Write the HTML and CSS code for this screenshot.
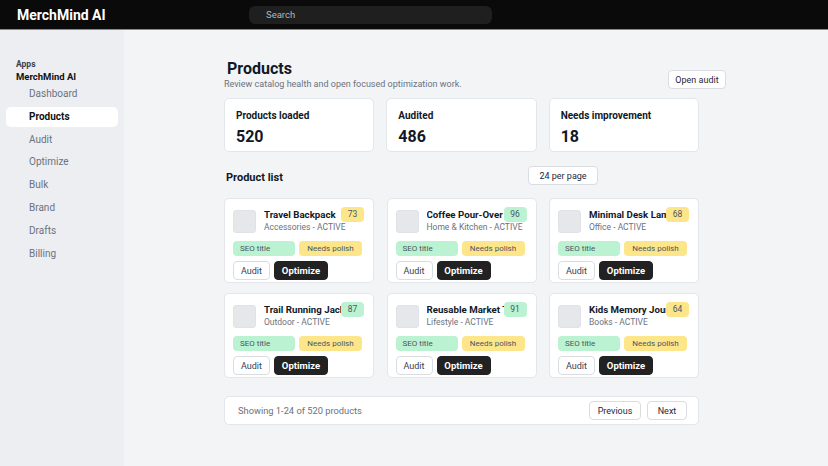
FILE: index.html
```html
<!DOCTYPE html>
<html>

<head>
  <meta charset="utf-8">
  <title>MerchMind AI - Products</title>
  <link rel="stylesheet" href="styles.css">
</head>

<body>
  <header class="topbar">
    <div class="brand">MerchMind AI</div>
    <div class="search">Search</div>
  </header>

  <div class="layout">
    <nav class="sidebar">
      <div class="side_label">Apps</div>
      <div class="side_app">MerchMind AI</div>
      <a class="nav_item">Dashboard</a>
      <a class="nav_item active">Products</a>
      <a class="nav_item">Audit</a>
      <a class="nav_item">Optimize</a>
      <a class="nav_item">Bulk</a>
      <a class="nav_item">Brand</a>
      <a class="nav_item">Drafts</a>
      <a class="nav_item">Billing</a>
    </nav>

    <main class="main">
      <div class="page_head">
        <div>
          <h1>Products</h1>
          <p class="subtitle">Review catalog health and open focused optimization work.</p>
        </div>
        <button class="btn btn_open">Open audit</button>
      </div>

      <div class="stats">
        <div class="stat">
          <div class="stat_label">Products loaded</div>
          <div class="stat_value">520</div>
        </div>
        <div class="stat">
          <div class="stat_label">Audited</div>
          <div class="stat_value">486</div>
        </div>
        <div class="stat">
          <div class="stat_label">Needs improvement</div>
          <div class="stat_value">18</div>
        </div>
      </div>

      <div class="list_head">
        <h2>Product list</h2>
        <button class="btn btn_perpage">24 per page</button>
      </div>

      <div class="grid">
        <div class="card">
          <span class="score yellow">73</span>
          <div class="card_top">
            <div class="thumb"></div>
            <div class="card_info">
              <div class="card_title">Travel Backpack</div>
              <div class="card_sub">Accessories - ACTIVE</div>
            </div>
          </div>
          <div class="tags"><span class="tag green">SEO title</span><span class="tag yellow">Needs polish</span></div>
          <div class="actions"><button class="btn btn_audit">Audit</button><button class="btn btn_dark">Optimize</button></div>
        </div>

        <div class="card">
          <span class="score green">96</span>
          <div class="card_top">
            <div class="thumb"></div>
            <div class="card_info">
              <div class="card_title">Coffee Pour-Over</div>
              <div class="card_sub">Home &amp; Kitchen - ACTIVE</div>
            </div>
          </div>
          <div class="tags"><span class="tag green">SEO title</span><span class="tag yellow">Needs polish</span></div>
          <div class="actions"><button class="btn btn_audit">Audit</button><button class="btn btn_dark">Optimize</button></div>
        </div>

        <div class="card">
          <span class="score yellow">68</span>
          <div class="card_top">
            <div class="thumb"></div>
            <div class="card_info">
              <div class="card_title">Minimal Desk Lamp</div>
              <div class="card_sub">Office - ACTIVE</div>
            </div>
          </div>
          <div class="tags"><span class="tag green">SEO title</span><span class="tag yellow">Needs polish</span></div>
          <div class="actions"><button class="btn btn_audit">Audit</button><button class="btn btn_dark">Optimize</button></div>
        </div>

        <div class="card">
          <span class="score green">87</span>
          <div class="card_top">
            <div class="thumb"></div>
            <div class="card_info">
              <div class="card_title">Trail Running Jacket</div>
              <div class="card_sub">Outdoor - ACTIVE</div>
            </div>
          </div>
          <div class="tags"><span class="tag green">SEO title</span><span class="tag yellow">Needs polish</span></div>
          <div class="actions"><button class="btn btn_audit">Audit</button><button class="btn btn_dark">Optimize</button></div>
        </div>

        <div class="card">
          <span class="score green">91</span>
          <div class="card_top">
            <div class="thumb"></div>
            <div class="card_info">
              <div class="card_title">Reusable Market Tote</div>
              <div class="card_sub">Lifestyle - ACTIVE</div>
            </div>
          </div>
          <div class="tags"><span class="tag green">SEO title</span><span class="tag yellow">Needs polish</span></div>
          <div class="actions"><button class="btn btn_audit">Audit</button><button class="btn btn_dark">Optimize</button></div>
        </div>

        <div class="card">
          <span class="score yellow">64</span>
          <div class="card_top">
            <div class="thumb"></div>
            <div class="card_info">
              <div class="card_title">Kids Memory Journal</div>
              <div class="card_sub">Books - ACTIVE</div>
            </div>
          </div>
          <div class="tags"><span class="tag green">SEO title</span><span class="tag yellow">Needs polish</span></div>
          <div class="actions"><button class="btn btn_audit">Audit</button><button class="btn btn_dark">Optimize</button></div>
        </div>
      </div>

      <div class="pager">
        <span class="pager_text">Showing 1-24 of 520 products</span>
        <div class="pager_btns">
          <button class="btn btn_prev">Previous</button>
          <button class="btn btn_next">Next</button>
        </div>
      </div>
    </main>
  </div>
</body>

</html>
```

FILE: styles.css
```css
* {
  box-sizing: border-box;
}

body {
  margin: 0;
  font-family: Roboto, "Noto Sans", sans-serif;
  color: #111827;
  background-color: #f3f4f6;
}

button {
  font-family: inherit;
}

/* top bar */
.topbar {
  height: 30px;
  background-color: #0a0a0a;
  border-bottom: 1px solid #8a8a8a;
  display: flex;
  align-items: center;
}

.brand {
  width: 249px;
  padding-left: 17px;
  color: #fff;
  font-size: 14px;
  font-weight: 700;
}

.search {
  width: 243px;
  height: 18px;
  margin-top: 1px;
  padding-left: 17px;
  border-radius: 6px;
  background-color: #1f1f1f;
  color: #b5b5b5;
  font-size: 9.5px;
  line-height: 18px;
}

/* layout */
.layout {
  display: flex;
  height: 436px;
}

.sidebar {
  width: 124px;
  flex-shrink: 0;
  background-color: #eceef1;
  padding: 28px 6px 0 6px;
}

.side_label {
  padding-left: 10px;
  font-size: 8.5px;
  font-weight: 700;
  color: #374151;
  line-height: 12px;
}

.side_app {
  padding-left: 10px;
  margin-bottom: 1px;
  font-size: 9.5px;
  font-weight: 700;
  color: #111;
  line-height: 13px;
}

.nav_item {
  display: block;
  height: 20px;
  line-height: 20px;
  margin-bottom: 2.8px;
  padding-left: 23px;
  border-radius: 5px;
  font-size: 10px;
  color: #6b7280;
}

.nav_item.active {
  background-color: #fff;
  color: #111;
  font-weight: 700;
}

/* main */
.main {
  flex: 1;
  padding: 30px 0 0 100px;
}

.page_head {
  width: 502px;
  display: flex;
  justify-content: space-between;
  align-items: flex-end;
}

h1 {
  margin: 0 0 0 3px;
  font-size: 16px;
  font-weight: 700;
  line-height: 18px;
}

.subtitle {
  margin: 0;
  font-size: 9px;
  line-height: 12px;
  color: #6b7280;
}

.btn {
  height: 19px;
  padding: 0;
  border: 1px solid #d9dce1;
  border-radius: 4px;
  background-color: #fff;
  color: #1f2937;
  font-size: 9px;
  cursor: pointer;
}

.btn_open {
  width: 58px;
  margin-bottom: 1px;
}

.stats {
  width: 475px;
  margin-top: 8px;
  display: grid;
  grid-template-columns: 1fr 1fr 1fr;
  column-gap: 12px;
}

.stat {
  height: 54px;
  padding: 10px 11px 0 11px;
  background-color: #fff;
  border: 1px solid #e3e6ea;
  border-radius: 5px;
}

.stat_label {
  font-size: 10px;
  font-weight: 700;
  line-height: 14px;
}

.stat_value {
  margin-top: 5px;
  font-size: 16px;
  font-weight: 700;
  line-height: 18px;
}

.list_head {
  width: 374px;
  margin-top: 14px;
  display: flex;
  justify-content: space-between;
  align-items: center;
}

h2 {
  margin: 3px 0 0 2px;
  font-size: 11px;
  font-weight: 700;
}

.btn_perpage {
  width: 70px;
}

/* product grid */
.grid {
  width: 475px;
  margin-top: 13px;
  display: grid;
  grid-template-columns: 1fr 1fr 1fr;
  gap: 10px 12.5px;
}

.card {
  position: relative;
  height: 85px;
  padding: 9px 8px 0 8px;
  background-color: #fff;
  border: 1px solid #e3e6ea;
  border-radius: 5px;
  overflow: hidden;
}

.card_top {
  display: flex;
  align-items: center;
  gap: 8px;
}

.thumb {
  width: 23px;
  height: 23px;
  flex-shrink: 0;
  border-radius: 3px;
  background-color: #e5e7eb;
  border: 1px solid #dfe2e6;
}

.card_info {
  min-width: 0;
  flex: 1;
}

.card_title {
  margin-right: 23px;
  font-size: 9.7px;
  font-weight: 700;
  line-height: 13px;
  white-space: nowrap;
  overflow: hidden;
}

.card_sub {
  font-size: 8.5px;
  color: #6b7280;
  line-height: 13px;
}

.score {
  position: absolute;
  top: 8px;
  right: 9px;
  width: 23px;
  height: 15px;
  border-radius: 4px;
  font-size: 8.5px;
  line-height: 15px;
  text-align: center;
  color: #4b5563;
}

.yellow {
  background-color: #fde68a;
}

.green {
  background-color: #bbf2d2;
}

.tags {
  margin-top: 7px;
  display: grid;
  grid-template-columns: 62px 63px;
  gap: 4px;
}

.tag {
  height: 15px;
  border-radius: 4px;
  font-size: 8px;
  line-height: 15px;
  text-align: center;
  color: #4b5563;
}

.tag.green {
  text-align: left;
  padding-left: 7px;
}

.actions {
  margin-top: 5px;
  display: flex;
  gap: 4px;
}

.btn_audit {
  width: 37px;
  font-size: 9px;
  color: #374151;
}

.btn_dark {
  width: 54px;
  background-color: #222;
  border-color: #222;
  color: #fff;
  font-size: 9.5px;
  font-weight: 700;
}

/* pagination */
.pager {
  width: 475px;
  height: 29px;
  margin-top: 18px;
  padding: 0 11px 0 13px;
  display: flex;
  justify-content: space-between;
  align-items: center;
  background-color: #fff;
  border: 1px solid #e3e6ea;
  border-radius: 5px;
}

.pager_text {
  font-size: 9.3px;
  color: #6b7280;
}

.pager_btns {
  display: flex;
  gap: 6px;
}

.btn_prev {
  width: 52px;
}

.btn_next {
  width: 40px;
}
```
